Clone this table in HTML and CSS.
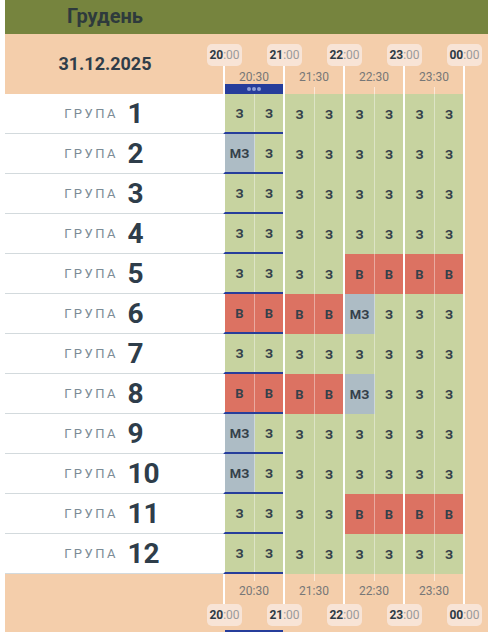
FILE: index.html
```html
<!DOCTYPE html>
<html lang="uk">
<head>
<meta charset="utf-8">
<title>Грудень</title>
<link rel="stylesheet" href="styles.css">
</head>
<body>
<div class="page">
  <div class="month"><div class="month-title">Грудень</div></div>

  <div class="band band-top">
    <div class="band-left"><span class="date">31.12.2025</span></div>
    <div class="axis">
      <div class="marks">
        <span class="mark"><b>20</b>:00</span>
        <span class="mark"><b>21</b>:00</span>
        <span class="mark"><b>22</b>:00</span>
        <span class="mark"><b>23</b>:00</span>
        <span class="mark"><b>00</b>:00</span>
      </div>
      <div class="halves">
        <div class="half"><span class="hl">20:30</span><span class="bar"><i></i><i></i><i></i></span></div>
        <div class="half"><span class="hl">21:30</span><span class="tick"></span></div>
        <div class="half"><span class="hl">22:30</span><span class="tick"></span></div>
        <div class="half"><span class="hl">23:30</span><span class="tick"></span></div>
      </div>
    </div>
  </div>

  <div class="rows">
    <div class="row"><div class="lab"><span class="g">ГРУПА</span><span class="n">1</span></div><div class="tl">
      <div class="grp now"><span class="c z">З</span><span class="c z">З</span></div><div class="grp"><span class="c z">З</span><span class="c z">З</span></div><div class="grp"><span class="c z">З</span><span class="c z">З</span></div><div class="grp"><span class="c z">З</span><span class="c z">З</span></div></div></div>
    <div class="row"><div class="lab"><span class="g">ГРУПА</span><span class="n">2</span></div><div class="tl">
      <div class="grp now"><span class="c m">МЗ</span><span class="c z">З</span></div><div class="grp"><span class="c z">З</span><span class="c z">З</span></div><div class="grp"><span class="c z">З</span><span class="c z">З</span></div><div class="grp"><span class="c z">З</span><span class="c z">З</span></div></div></div>
    <div class="row"><div class="lab"><span class="g">ГРУПА</span><span class="n">3</span></div><div class="tl">
      <div class="grp now"><span class="c z">З</span><span class="c z">З</span></div><div class="grp"><span class="c z">З</span><span class="c z">З</span></div><div class="grp"><span class="c z">З</span><span class="c z">З</span></div><div class="grp"><span class="c z">З</span><span class="c z">З</span></div></div></div>
    <div class="row"><div class="lab"><span class="g">ГРУПА</span><span class="n">4</span></div><div class="tl">
      <div class="grp now"><span class="c z">З</span><span class="c z">З</span></div><div class="grp"><span class="c z">З</span><span class="c z">З</span></div><div class="grp"><span class="c z">З</span><span class="c z">З</span></div><div class="grp"><span class="c z">З</span><span class="c z">З</span></div></div></div>
    <div class="row"><div class="lab"><span class="g">ГРУПА</span><span class="n">5</span></div><div class="tl">
      <div class="grp now"><span class="c z">З</span><span class="c z">З</span></div><div class="grp"><span class="c z">З</span><span class="c z">З</span></div><div class="grp"><span class="c v">В</span><span class="c v">В</span></div><div class="grp"><span class="c v">В</span><span class="c v">В</span></div></div></div>
    <div class="row"><div class="lab"><span class="g">ГРУПА</span><span class="n">6</span></div><div class="tl">
      <div class="grp now"><span class="c v">В</span><span class="c v">В</span></div><div class="grp"><span class="c v">В</span><span class="c v">В</span></div><div class="grp"><span class="c m">МЗ</span><span class="c z">З</span></div><div class="grp"><span class="c z">З</span><span class="c z">З</span></div></div></div>
    <div class="row"><div class="lab"><span class="g">ГРУПА</span><span class="n">7</span></div><div class="tl">
      <div class="grp now"><span class="c z">З</span><span class="c z">З</span></div><div class="grp"><span class="c z">З</span><span class="c z">З</span></div><div class="grp"><span class="c z">З</span><span class="c z">З</span></div><div class="grp"><span class="c z">З</span><span class="c z">З</span></div></div></div>
    <div class="row"><div class="lab"><span class="g">ГРУПА</span><span class="n">8</span></div><div class="tl">
      <div class="grp now"><span class="c v">В</span><span class="c v">В</span></div><div class="grp"><span class="c v">В</span><span class="c v">В</span></div><div class="grp"><span class="c m">МЗ</span><span class="c z">З</span></div><div class="grp"><span class="c z">З</span><span class="c z">З</span></div></div></div>
    <div class="row"><div class="lab"><span class="g">ГРУПА</span><span class="n">9</span></div><div class="tl">
      <div class="grp now"><span class="c m">МЗ</span><span class="c z">З</span></div><div class="grp"><span class="c z">З</span><span class="c z">З</span></div><div class="grp"><span class="c z">З</span><span class="c z">З</span></div><div class="grp"><span class="c z">З</span><span class="c z">З</span></div></div></div>
    <div class="row"><div class="lab"><span class="g">ГРУПА</span><span class="n">10</span></div><div class="tl">
      <div class="grp now"><span class="c m">МЗ</span><span class="c z">З</span></div><div class="grp"><span class="c z">З</span><span class="c z">З</span></div><div class="grp"><span class="c z">З</span><span class="c z">З</span></div><div class="grp"><span class="c z">З</span><span class="c z">З</span></div></div></div>
    <div class="row"><div class="lab"><span class="g">ГРУПА</span><span class="n">11</span></div><div class="tl">
      <div class="grp now"><span class="c z">З</span><span class="c z">З</span></div><div class="grp"><span class="c z">З</span><span class="c z">З</span></div><div class="grp"><span class="c v">В</span><span class="c v">В</span></div><div class="grp"><span class="c v">В</span><span class="c v">В</span></div></div></div>
    <div class="row"><div class="lab"><span class="g">ГРУПА</span><span class="n">12</span></div><div class="tl">
      <div class="grp now"><span class="c z">З</span><span class="c z">З</span></div><div class="grp"><span class="c z">З</span><span class="c z">З</span></div><div class="grp"><span class="c z">З</span><span class="c z">З</span></div><div class="grp"><span class="c z">З</span><span class="c z">З</span></div></div></div>
  </div>

  <div class="band band-bottom">
    <div class="band-left"></div>
    <div class="axis">
      <div class="halves">
        <div class="half"><span class="tick"></span><span class="hl">20:30</span></div>
        <div class="half"><span class="tick"></span><span class="hl">21:30</span></div>
        <div class="half"><span class="tick"></span><span class="hl">22:30</span></div>
        <div class="half"><span class="tick"></span><span class="hl">23:30</span></div>
      </div>
      <div class="marks">
        <span class="mark"><b>20</b>:00</span>
        <span class="mark"><b>21</b>:00</span>
        <span class="mark"><b>22</b>:00</span>
        <span class="mark"><b>23</b>:00</span>
        <span class="mark"><b>00</b>:00</span>
      </div>
      <div class="bar bar-bottom"></div>
    </div>
  </div>
</div>
</body>
</html>
```
FILE: styles.css
```css
html, body {
  margin: 0;
  padding: 0;
  background: #ffffff;
}
body {
  font-family: Roboto, "Noto Sans", "Liberation Sans", sans-serif;
  color: #2f3c47;
  overflow: hidden;
}
.page {
  margin-left: 5px;
  width: 483px;
  height: 632px;
  background: #f4ceab;
  overflow: hidden;
}
.month {
  height: 34px;
  background: #76843e;
}
.month-title {
  width: 200px;
  text-align: center;
  font-size: 20px;
  font-weight: 700;
  line-height: 33px;
  color: #2e3a3c;
}
.band {
  display: grid;
  grid-template-columns: 218px 242px;
}
.band-top { height: 60px; }
.band-bottom { height: 58px; }
.band-left {
  display: flex;
  align-items: center;
  justify-content: center;
  padding-right: 18px;
}
.date {
  font-size: 18px;
  font-weight: 700;
  color: #2f3d49;
  padding-bottom: 1px;
}
.axis {
  display: flex;
  flex-direction: column;
  min-width: 0;
}
.marks {
  display: flex;
  gap: 25px;
  margin-left: -16px;
  position: relative;
  z-index: 1;
}
.band-top .marks {
  height: 32px;
  padding-top: 10px;
  box-sizing: border-box;
}
.mark {
  flex: 0 0 35px;
  height: 22px;
  box-sizing: border-box;
  border-radius: 5px;
  background: #f8e4d6;
  font-size: 12px;
  line-height: 22px;
  text-align: center;
  color: #9a9a9a;
  white-space: nowrap;
}
.mark b {
  color: #2d3a45;
  font-weight: 700;
}
.halves {
  display: flex;
  border-right: 2px solid #ffffff;
  width: 242px;
  box-sizing: border-box;
}
.band-top .halves { height: 28px; }
.band-bottom .halves { height: 30px; }
.half {
  width: 60px;
  border-left: 2px solid #ffffff;
  box-sizing: border-box;
  display: flex;
  flex-direction: column;
}
.hl {
  font-size: 12px;
  line-height: 14px;
  color: #777777;
  text-align: center;
  width: 58px;
}
.band-top .hl { padding-top: 4px; }
.band-bottom .hl { padding-top: 3px; }
.tick {
  width: 1px;
  height: 7px;
  margin-left: 29px;
  background: rgba(255, 255, 255, 0.55);
}
.band-top .tick { margin-top: 3px; }
.bar {
  height: 10px;
  width: 58px;
  background: #263d9b;
  display: flex;
  justify-content: center;
  align-items: center;
  gap: 1px;
}
.bar i {
  width: 4px;
  height: 4px;
  border-radius: 50%;
  background: #8e9fd6;
}
.bar-bottom {
  margin-left: 2px;
  margin-top: 4px;
}
.row {
  display: grid;
  grid-template-columns: 218px 242px;
  height: 40px;
}
.lab {
  background: #ffffff;
  border-bottom: 1px solid #d3dadd;
  box-sizing: border-box;
  display: flex;
  align-items: center;
}
.g {
  width: 113px;
  text-align: right;
  font-size: 13px;
  letter-spacing: 2.5px;
  color: #7b8b96;
}
.n {
  margin-left: 9.5px;
  font-size: 28px;
  font-weight: 700;
  color: #2e3d4a;
  line-height: 1;
}
.tl {
  display: flex;
  border-right: 2px solid #ffffff;
  box-sizing: border-box;
}
.grp {
  width: 60px;
  height: 40px;
  border-left: 2px solid #ffffff;
  box-sizing: border-box;
  display: flex;
}
.grp.now {
  border-bottom: 2px solid #263d9b;
}
.c {
  display: flex;
  align-items: center;
  justify-content: center;
  font-size: 13px;
  font-weight: 700;
  color: #35414b;
  width: 28px;
}
.c:first-child {
  width: 30px;
  border-right: 1px solid rgba(255, 255, 255, 0.4);
  box-sizing: border-box;
}
.z { background: #c7d3a0; }
.v { background: #dc7262; }
.m { background: #adbcc5; }
```
